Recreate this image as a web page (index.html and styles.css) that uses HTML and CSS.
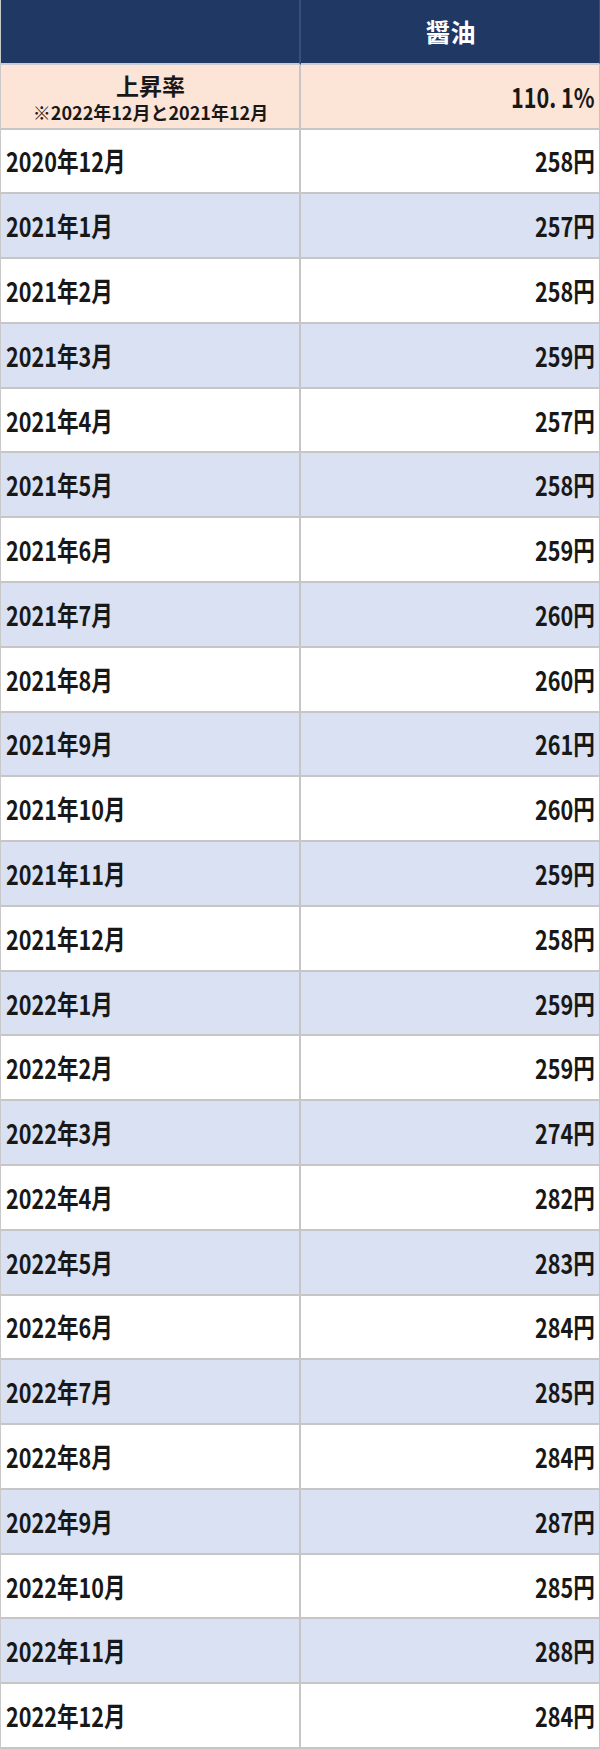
FILE: index.html
```html
<!DOCTYPE html>
<html lang="ja">
<head>
<meta charset="utf-8">
<title>醤油 価格推移</title>
<link rel="stylesheet" href="styles.css">
</head>
<body>
<div class="table">
  <div class="cell head"></div>
  <div class="cell head center">醤油</div>
  <div class="cell rate stack">
    <div class="rate-title">上昇率</div>
    <div class="rate-note">※2022年12月と2021年12月</div>
  </div>
  <div class="cell rate right"><span class="t">110.<span class="gap">1%</span></span></div>

  <div class="cell"><span class="t">2020年12月</span></div><div class="cell right"><span class="t">258円</span></div>
  <div class="cell alt"><span class="t">2021年1月</span></div><div class="cell alt right"><span class="t">257円</span></div>
  <div class="cell"><span class="t">2021年2月</span></div><div class="cell right"><span class="t">258円</span></div>
  <div class="cell alt"><span class="t">2021年3月</span></div><div class="cell alt right"><span class="t">259円</span></div>
  <div class="cell"><span class="t">2021年4月</span></div><div class="cell right"><span class="t">257円</span></div>
  <div class="cell alt"><span class="t">2021年5月</span></div><div class="cell alt right"><span class="t">258円</span></div>
  <div class="cell"><span class="t">2021年6月</span></div><div class="cell right"><span class="t">259円</span></div>
  <div class="cell alt"><span class="t">2021年7月</span></div><div class="cell alt right"><span class="t">260円</span></div>
  <div class="cell"><span class="t">2021年8月</span></div><div class="cell right"><span class="t">260円</span></div>
  <div class="cell alt"><span class="t">2021年9月</span></div><div class="cell alt right"><span class="t">261円</span></div>
  <div class="cell"><span class="t">2021年10月</span></div><div class="cell right"><span class="t">260円</span></div>
  <div class="cell alt"><span class="t">2021年11月</span></div><div class="cell alt right"><span class="t">259円</span></div>
  <div class="cell"><span class="t">2021年12月</span></div><div class="cell right"><span class="t">258円</span></div>
  <div class="cell alt"><span class="t">2022年1月</span></div><div class="cell alt right"><span class="t">259円</span></div>
  <div class="cell"><span class="t">2022年2月</span></div><div class="cell right"><span class="t">259円</span></div>
  <div class="cell alt"><span class="t">2022年3月</span></div><div class="cell alt right"><span class="t">274円</span></div>
  <div class="cell"><span class="t">2022年4月</span></div><div class="cell right"><span class="t">282円</span></div>
  <div class="cell alt"><span class="t">2022年5月</span></div><div class="cell alt right"><span class="t">283円</span></div>
  <div class="cell"><span class="t">2022年6月</span></div><div class="cell right"><span class="t">284円</span></div>
  <div class="cell alt"><span class="t">2022年7月</span></div><div class="cell alt right"><span class="t">285円</span></div>
  <div class="cell"><span class="t">2022年8月</span></div><div class="cell right"><span class="t">284円</span></div>
  <div class="cell alt"><span class="t">2022年9月</span></div><div class="cell alt right"><span class="t">287円</span></div>
  <div class="cell"><span class="t">2022年10月</span></div><div class="cell right"><span class="t">285円</span></div>
  <div class="cell alt"><span class="t">2022年11月</span></div><div class="cell alt right"><span class="t">288円</span></div>
  <div class="cell"><span class="t">2022年12月</span></div><div class="cell right"><span class="t">284円</span></div>
</div>
</body>
</html>
```

FILE: styles.css
```css
html, body {
  margin: 0;
  padding: 0;
  background: #ffffff;
}

.table {
  width: 600px;
  height: 1749px;
  box-sizing: border-box;
  display: grid;
  grid-template-columns: 300px 300px;
  grid-template-rows: repeat(27, 1fr);
  border-left: 1px solid #c9c9c9;
  font-family: "Noto Sans CJK JP", sans-serif;
  font-weight: 700;
  font-size: 27px;
  color: #181818;
}

.cell {
  box-sizing: border-box;
  display: flex;
  align-items: center;
  padding: 0 4px 0 5px;
  background: #ffffff;
  border-right: 2px solid #c6c6c6;
  border-bottom: 2px solid #c6c6c6;
  line-height: 1;
  white-space: nowrap;
  overflow: hidden;
}

.cell.alt {
  background: #d9e1f2;
}

.t {
  display: inline-block;
  transform: scaleX(0.8);
  transform-origin: left center;
}

.cell.right {
  justify-content: flex-end;
}

.cell.right .t {
  transform-origin: right center;
}

.gap {
  margin-left: 6px;
}

.cell.center {
  justify-content: center;
}

.cell.head {
  background: #203864;
  color: #ffffff;
  font-size: 25px;
  font-weight: 700;
  border-right-color: #3a4f78;
  border-bottom-color: #c8ccd6;
}

.cell.rate {
  background: #fce4d6;
}

.cell.stack {
  flex-direction: column;
  justify-content: center;
  align-items: center;
  gap: 6px;
  padding-top: 2px;
}

.rate-title {
  font-size: 23px;
  line-height: 1;
}

.rate-note {
  font-size: 18px;
  font-weight: 700;
  line-height: 1;
}
```
